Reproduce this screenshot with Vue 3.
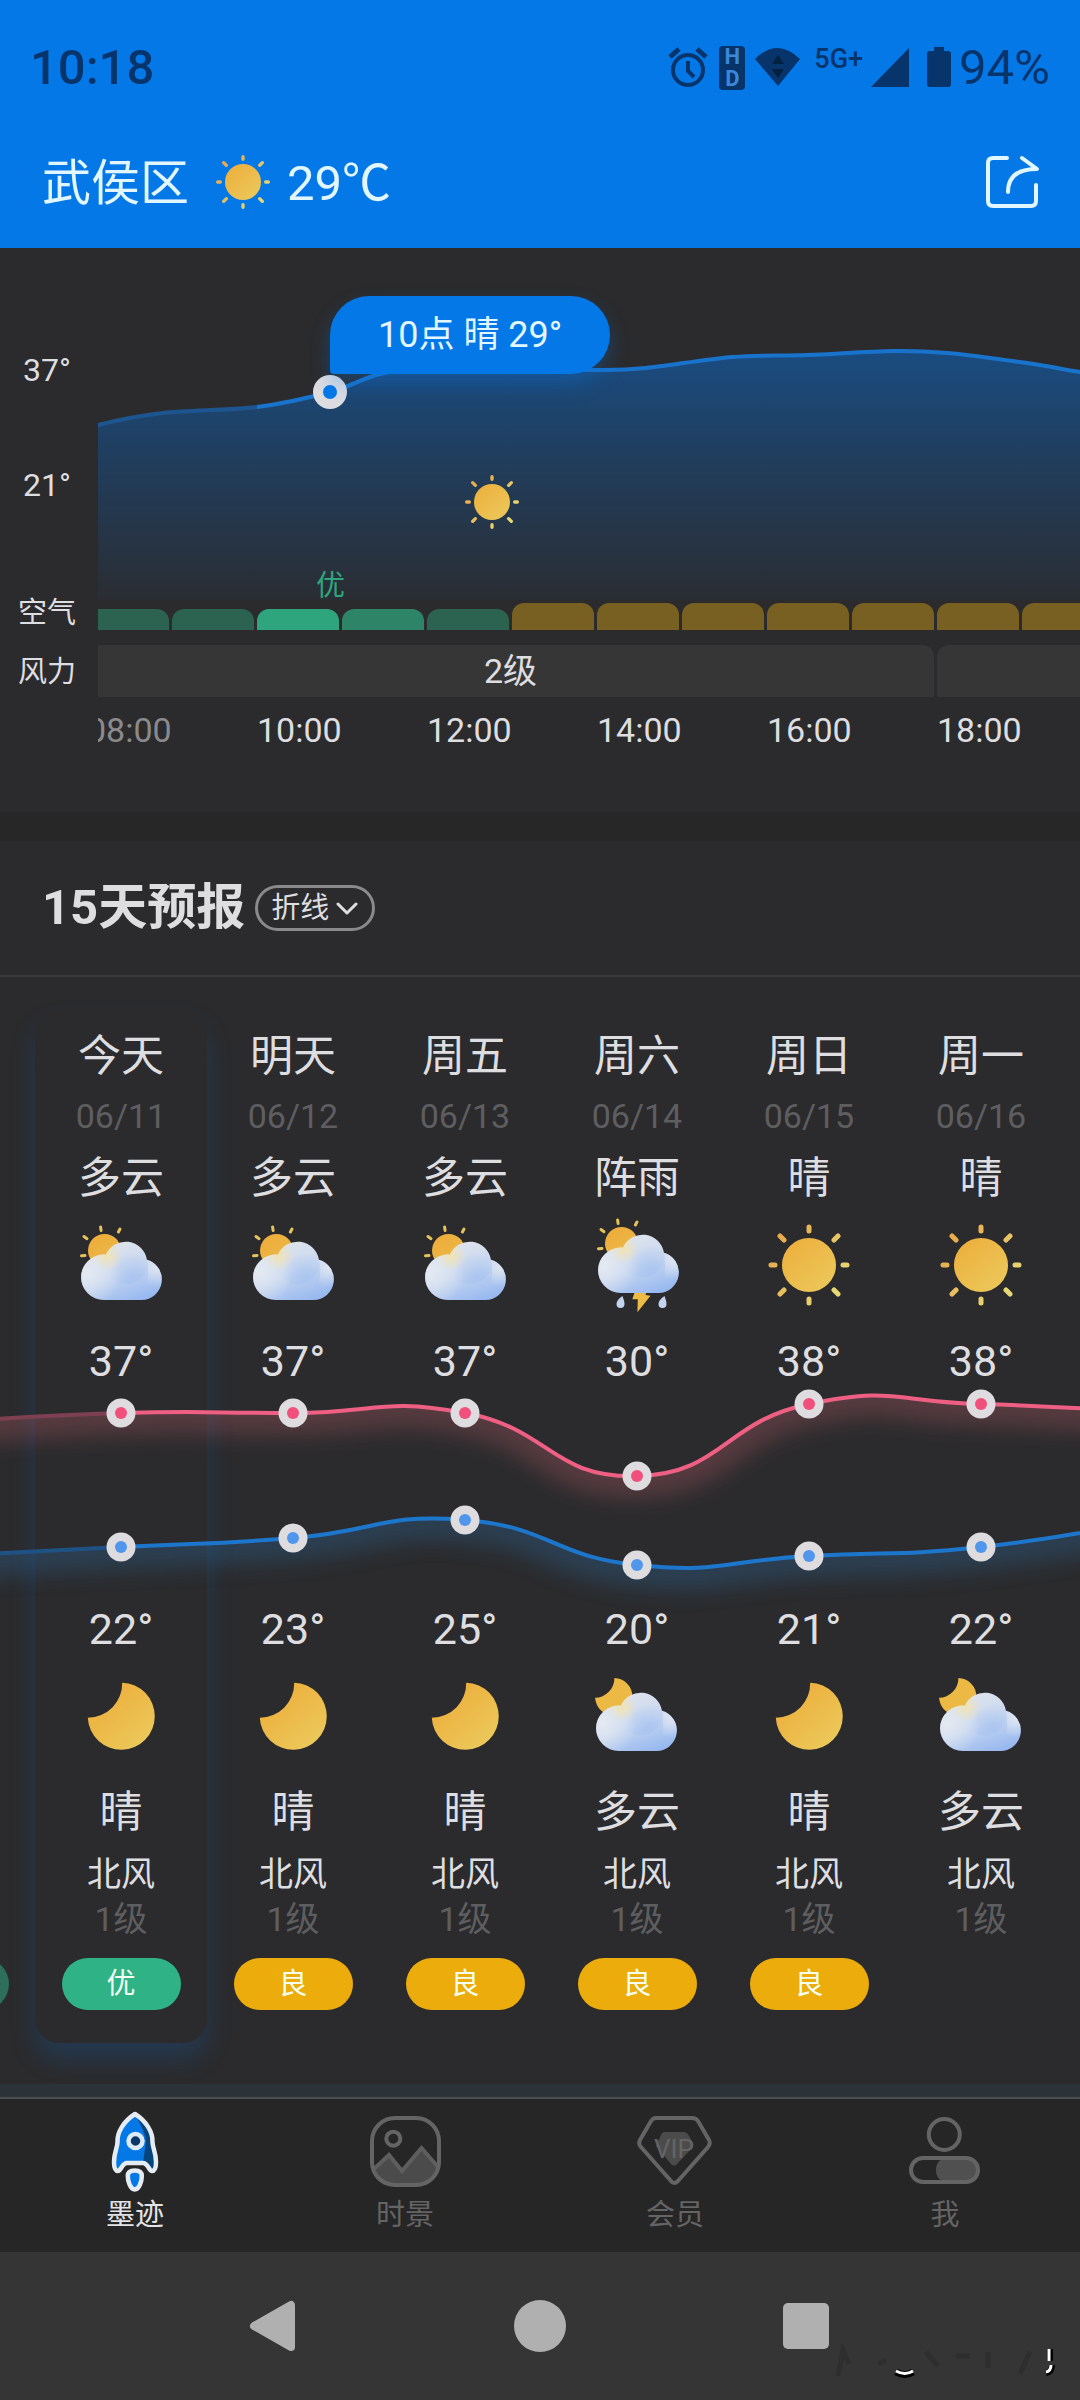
<template>
  <div class="weather-app">
    <svg class="sprite" width="0" height="0" aria-hidden="true">
      <defs>
        <linearGradient id="sunFill" gradientUnits="userSpaceOnUse" x1="24" y1="22" x2="70" y2="76">
          <stop offset="0" stop-color="#edae3c" />
          <stop offset="1" stop-color="#ebca5c" />
        </linearGradient>
        <linearGradient id="rayFill" gradientUnits="userSpaceOnUse" x1="12" y1="20" x2="84" y2="76">
          <stop offset="0" stop-color="#e9a84a" />
          <stop offset="1" stop-color="#e6dc78" />
        </linearGradient>
        <linearGradient id="cloudFill" gradientUnits="userSpaceOnUse" x1="36" y1="28" x2="56" y2="86">
          <stop offset="0" stop-color="#dfe4ed" />
          <stop offset="0.5" stop-color="#c6d6f0" />
          <stop offset="1" stop-color="#98b9f0" />
        </linearGradient>
        <radialGradient id="cloudLeft" gradientUnits="userSpaceOnUse" cx="14" cy="56" r="34">
          <stop offset="0" stop-color="#e6ebf2" stop-opacity="0.9" />
          <stop offset="1" stop-color="#e6ebf2" stop-opacity="0" />
        </radialGradient>
        <radialGradient id="cloudRight" gradientUnits="userSpaceOnUse" cx="84" cy="50" r="20">
          <stop offset="0" stop-color="#e2e8f2" stop-opacity="0.9" />
          <stop offset="1" stop-color="#e2e8f2" stop-opacity="0" />
        </radialGradient>
        <radialGradient id="cloudWarm" gradientUnits="userSpaceOnUse" cx="34" cy="39" r="15">
          <stop offset="0" stop-color="#f3e3ac" stop-opacity="0.9" />
          <stop offset="1" stop-color="#f3e3ac" stop-opacity="0" />
        </radialGradient>
        <radialGradient id="cloudCore" gradientUnits="userSpaceOnUse" cx="60" cy="60" r="24">
          <stop offset="0" stop-color="#a4c1f0" stop-opacity="0.7" />
          <stop offset="1" stop-color="#a4c1f0" stop-opacity="0" />
        </radialGradient>
      </defs>

      <symbol id="sunny" viewBox="0 0 96 96">
        <circle cx="48" cy="48" r="27" fill="url(#sunFill)" />
        <g stroke="url(#rayFill)" stroke-width="5" stroke-linecap="round">
          <path d="M48 10v4M48 82v4M10 48h4M82 48h4M19 19l4 4M73 73l4 4M77 19l-4 4M23 73l-4 4" />
        </g>
      </symbol>

      <symbol id="cloud" viewBox="0 0 96 96">
        <path id="cloudShape" d="M31 83A22.700 22.700 0 1 1 33 37.700 21.500 21.500 0 0 1 74 42.800 20.500 20.500 0 0 1 68.500 83z" fill="url(#cloudFill)" />
        <circle cx="53" cy="46" r="21.500" fill="url(#cloudCore)" />
        <circle cx="30.700" cy="60.300" r="22.700" fill="url(#cloudLeft)" />
        <path d="M74 42.800A20.500 20.500 0 0 1 68.500 83Q78 60 74 42.800z" fill="url(#cloudRight)" />
        <path d="M31 83A22.700 22.700 0 1 1 33 37.700 21.500 21.500 0 0 1 53 24V83z" fill="url(#cloudWarm)" />
      </symbol>

      <symbol id="peekSun" viewBox="0 0 96 96">
        <circle cx="31.500" cy="33.500" r="16.500" fill="url(#sunFill)" />
        <path d="M27.600 10l.5 3.500M47 12l-1.600 3M11 19.500l3 2.200M8.500 38.800l3.500-.4" stroke="#e3c35a" stroke-width="3" stroke-linecap="round" />
      </symbol>

      <symbol id="cloudy" viewBox="0 0 96 96">
        <use href="#peekSun" width="96" height="96" />
        <use href="#cloud" width="96" height="96" />
      </symbol>

      <symbol id="shower" viewBox="0 0 96 96">
        <path d="M46.700 72L43.300 82.300h5.500l-.4 13L61.500 78.700l-5-.7 1.500-6z" fill="#eebb47" />
        <path d="M33.500 79q-6 4-6 8a4 4 0 0 0 8 0q0-3-2-8zM75.500 79q-6 4-6 8a4 4 0 0 0 8 0q0-3-2-8z" fill="#c3d3ee" />
        <use href="#peekSun" x="1" y="-7" width="96" height="96" />
        <use href="#cloud" x="1" y="-7" width="96" height="96" />
      </symbol>

      <symbol id="moon" viewBox="0 0 96 96">
        <path d="M49.200 9.700A33.500 33.500 0 1 1 14.800 44.700 34.300 34.300 0 0 0 49.200 9.700z" fill="url(#sunFill)" />
      </symbol>

      <symbol id="nightCloudy" viewBox="0 0 96 96">
        <path d="M25.400 5A18.700 18.700 0 1 1 6.100 24.700 19.500 19.500 0 0 0 25.400 5z" fill="#ecb945" />
        <use href="#cloud" x="-1" y="-5" width="96" height="96" />
      </symbol>
    </svg>

    <header class="top">
      <div class="status-bar">
        <span class="clock">10:18</span>
        <div class="status-icons">
          <svg width="44" height="44" viewBox="0 0 44 44" fill="none" stroke="currentColor">
            <circle cx="21" cy="24" r="15" stroke-width="4" />
            <path d="M3 11l9-8M39 11l-9-8" stroke-width="5" />
            <path d="M21 15v10l6 6" stroke-width="4" />
          </svg>
          <span class="hd"><b>H</b><b>D</b></span>
          <svg width="51" height="44" viewBox="0 0 51 44">
            <path d="M0 13Q22 -9 45 13L23 40z" fill="currentColor" />
            <path d="M23 9l6 9H17zM23 32l6-9H17z" fill="#02203f" />
          </svg>
          <span class="network">5G+</span>
          <svg width="48" height="44" viewBox="0 0 48 44">
            <path d="M38 2v39H0z" fill="currentColor" />
          </svg>
          <svg width="24" height="44" viewBox="0 0 24 44">
            <path d="M7 1h10v4h4q3 0 3 3v30q0 3-3 3H3q-3 0-3-3V8q0-3 3-3h4z" fill="currentColor" />
          </svg>
          <span class="battery">94%</span>
        </div>
      </div>
      <div class="title-bar">
        <h1>武侯区</h1>
        <svg class="title-sun"><use href="#sunny" /></svg>
        <span class="now-temp">29℃</span>
        <button class="share" aria-label="分享">
          <svg width="54" height="54" viewBox="0 0 54 54" fill="none" stroke="#e2f6ff" stroke-width="4" stroke-linecap="round" stroke-linejoin="round">
            <path d="M21 3H7q-5 0-5 5v38q0 5 5 5h38q5 0 5-5V30" />
            <path d="M22 37C22 21 32 14 51 14L36 3" />
          </svg>
        </button>
      </div>
    </header>

    <section class="hourly">
      <div class="axis">
        <span class="axis-high">37°</span>
        <span class="axis-low">21°</span>
        <span class="axis-air">空气</span>
        <span class="axis-wind">风力</span>
      </div>
      <div class="hour-scroll">
        <div class="hour-track">
          <svg class="hour-chart" width="1020" height="352">
            <defs>
              <linearGradient id="hourFill" gradientUnits="userSpaceOnUse" x1="0" y1="100" x2="0" y2="352">
                <stop offset="0" stop-color="#194c82" />
                <stop offset="0.4" stop-color="#203f60" />
                <stop offset="1" stop-color="#2a2d33" />
              </linearGradient>
              <linearGradient id="hourLine" gradientUnits="userSpaceOnUse" x1="0" y1="0" x2="1020" y2="0">
                <stop offset="0.167" stop-color="#1c558f" />
                <stop offset="0.167" stop-color="#1873cd" />
              </linearGradient>
            </defs>
            <path :d="hourPath + 'V352H-30z'" fill="url(#hourFill)" />
            <path :d="hourPath" fill="none" stroke="url(#hourLine)" stroke-width="4" />
            <circle cx="243" cy="144" r="17" fill="#dddde1" />
            <circle cx="243" cy="144" r="7" fill="#0578e8" />
          </svg>
          <div class="hour-tip">10点 晴 29°</div>
          <svg class="hour-sun"><use href="#sunny" /></svg>
          <span class="air-label">优</span>
          <div class="air-row">
            <i v-for="(level, i) in airLevels" :key="i" class="air-bar" :class="level"></i>
          </div>
          <div class="wind-row">
            <div class="wind-block wide">2级</div>
            <div class="wind-block"></div>
          </div>
          <div class="time-row">
            <span v-for="time in times" :key="time" :class="{ past: time === '08:00' }">{{ time }}</span>
          </div>
        </div>
      </div>
    </section>

    <section class="forecast">
      <div class="forecast-head">
        <h2>15天预报</h2>
        <label class="mode">
          <select v-model="mode" aria-label="显示方式">
            <option value="line">折线</option>
          </select>
          <svg width="22" height="14" viewBox="0 0 22 14" fill="none" stroke="#dedee0" stroke-width="3" stroke-linecap="round" stroke-linejoin="round">
            <path d="M2 2l9 9 9-9" />
          </svg>
        </label>
      </div>

      <div class="day-scroll">
        <div class="day-track">
          <div v-for="(day, i) in days" :key="i" class="day" :class="{ today: i === 1, past: i === 0 }">
            <template v-if="day.name">
              <span class="big">{{ day.name }}</span>
              <span class="date">{{ day.date }}</span>
              <span class="big">{{ day.text }}</span>
              <svg class="day-icon"><use :href="'#' + day.icon" /></svg>
              <span class="temp">{{ day.high }}°</span>
              <div class="chart-space"></div>
              <span class="temp low">{{ day.low }}°</span>
              <svg class="day-icon"><use :href="'#' + day.nightIcon" /></svg>
              <span class="big">{{ day.nightText }}</span>
              <div class="wind">北风<small>1级</small></div>
            </template>
            <span v-if="day.air" class="air-pill" :class="day.air">{{ airNames[day.air] }}</span>
            <span v-else-if="i === 0" class="air-pill good"></span>
          </div>

          <svg class="day-chart" width="1376" height="260">
            <defs>
              <linearGradient id="highLine" gradientUnits="userSpaceOnUse" x1="0" y1="0" x2="1376" y2="0">
                <stop offset="0.1875" stop-color="#7d3f52" />
                <stop offset="0.1875" stop-color="#ee5f83" />
              </linearGradient>
              <linearGradient id="lowLine" gradientUnits="userSpaceOnUse" x1="0" y1="0" x2="1376" y2="0">
                <stop offset="0.1875" stop-color="#1f5284" />
                <stop offset="0.1875" stop-color="#1c76cc" />
              </linearGradient>
              <filter id="soft" filterUnits="userSpaceOnUse" x="0" y="-20" width="1376" height="320">
                <feGaussianBlur stdDeviation="11" />
              </filter>
              <clipPath id="underHigh"><path :d="highPath + 'V320H86z'" /></clipPath>
              <clipPath id="underLow"><path :d="lowPath + 'V320H86z'" /></clipPath>
            </defs>
            <g clip-path="url(#underHigh)">
              <path :d="highPath" class="glow" stroke="#d96a78" filter="url(#soft)" />
            </g>
            <g clip-path="url(#underLow)">
              <path :d="lowPath" class="glow" stroke="#2d7fc4" filter="url(#soft)" />
            </g>
            <path :d="highPath" fill="none" stroke="url(#highLine)" stroke-width="4" />
            <path :d="lowPath" fill="none" stroke="url(#lowLine)" stroke-width="4" />
            <g v-for="(p, i) in highPoints" :key="'h' + i">
              <circle :cx="p[0]" :cy="p[1]" r="14.500" fill="#dedcde" />
              <circle :cx="p[0]" :cy="p[1]" r="6" fill="#f0507b" />
            </g>
            <g v-for="(p, i) in lowPoints" :key="'l' + i">
              <circle :cx="p[0]" :cy="p[1]" r="14.500" fill="#dedcde" />
              <circle :cx="p[0]" :cy="p[1]" r="6" fill="#4f96ec" />
            </g>
          </svg>
        </div>
      </div>
    </section>

    <div class="next-card"></div>

    <nav class="tabs">
      <a href="#" class="tab active">
        <svg class="tab-icon" viewBox="0 0 96 96">
          <path d="M48 11C37 18 30 29 30.500 39c0 6-3.500 10-3.500 20 0 6 1 9 4 9s4-8 9-8h16c5 0 6 8 9 8s4-3 4-9c0-10-3.500-14-3.500-20C66 29 59 18 48 11z" fill="#0578e8" />
          <path d="M48 12c10 6 17 17 17 27 0 6 3 10 3 20 0 5-1 7-3 7s-4-5-9-6l3-22q-2-12-11-26z" fill="#06447c" />
          <path d="M48 11C37 18 30 29 30.500 39c0 6-3.500 10-3.500 20 0 6 1 9 4 9s4-8 9-8h16c5 0 6 8 9 8s4-3 4-9c0-10-3.500-14-3.500-20C66 29 59 18 48 11z" fill="none" stroke="#e6ecf3" stroke-width="4.500" stroke-linejoin="round" />
          <circle cx="48.500" cy="38" r="7" fill="#0b3768" stroke="#dce9f7" stroke-width="4.500" />
          <path d="M47.800 67.500c-4.500 0-7 2-7 5.500 0 5 2.500 13.500 7 13.500s7-8.500 7-13.500c0-3.500-2.500-5.500-7-5.500z" fill="#0578e8" stroke="#e6ecf3" stroke-width="4.500" />
        </svg>
        <span>墨迹</span>
      </a>
      <a href="#" class="tab">
        <svg class="tab-icon" viewBox="0 0 96 96">
          <path d="M15 66l17-15 13 17 19.500-24 17 21q-2 17-21 17H36q-18 0-21-16z" fill="#4b4b4b" />
          <path d="M16 67l16-15 13 16 19.500-23L81 64" fill="none" stroke="#5e5e5e" stroke-width="4" />
          <rect x="15" y="15" width="67" height="67" rx="23" fill="none" stroke="#646464" stroke-width="4" />
          <circle cx="36.300" cy="35.700" r="7" fill="none" stroke="#646464" stroke-width="4" />
        </svg>
        <span>时景</span>
      </a>
      <a href="#" class="tab">
        <svg class="tab-icon" viewBox="0 0 96 96">
          <path d="M37 29h20q3 0 5 4l4 7q1 3-1 5L50 61q-3 3-6 0L29 43l5-11q1-3 3-3z" fill="#4b4b4b" />
          <path d="M29 15h36q4 0 6 3l11 19q2 3-1 7L51 78q-4 4-7 0L14 44q-3-3-1-7l11-19q2-3 5-3z" fill="none" stroke="#646464" stroke-width="4" />
          <text class="vip-text" x="47" y="55" text-anchor="middle">VIP</text>
        </svg>
        <span>会员</span>
      </a>
      <a href="#" class="tab">
        <svg class="tab-icon" viewBox="0 0 96 96">
          <path d="M50 55h18a12 12 0 0 1 0 24H50q-11-1-11-12t11-12z" fill="#505050" />
          <rect x="14" y="55" width="67" height="24" rx="12" fill="none" stroke="#646464" stroke-width="4" />
          <circle cx="47.300" cy="31.500" r="15.500" fill="none" stroke="#646464" stroke-width="4" />
        </svg>
        <span>我</span>
      </a>
    </nav>

    <footer class="system-nav">
      <button aria-label="返回">
        <svg width="52" height="52" viewBox="0 0 52 52">
          <path d="M43 5v42L6 26z" fill="#b0b0b0" stroke="#b0b0b0" stroke-width="8" stroke-linejoin="round" />
        </svg>
      </button>
      <button aria-label="主屏幕">
        <svg width="52" height="52" viewBox="0 0 52 52"><circle cx="26" cy="26" r="26" fill="#b0b0b0" /></svg>
      </button>
      <button aria-label="最近任务">
        <svg width="52" height="52" viewBox="0 0 52 52"><rect x="3" y="3" width="46" height="46" rx="5" fill="#b0b0b0" /></svg>
      </button>
      <svg class="smudge" width="230" height="36" viewBox="0 0 230 36">
        <g stroke="#262626" stroke-width="5" opacity="0.4" fill="none">
          <path d="M8 32l5-26 6 14M48 20l8-4M96 8l12 14M126 12h14M158 8v16M190 30l10-22" />
        </g>
        <path d="M66 28q9 5 17 0" stroke="#000" stroke-width="7" fill="none" />
        <path d="M66 27q9 5 17 0" stroke="#fff" stroke-width="3" fill="none" />
        <path d="M220 5v12M222 21q0 7-6 8" stroke="#000" stroke-width="6" fill="none" />
        <path d="M219 5v12M221 21q0 6-5 7" stroke="#fff" stroke-width="3" fill="none" />
      </svg>
    </footer>
  </div>
</template>

<script setup>
import { ref } from 'vue'

const mode = ref('line')

const times = ['08:00', '10:00', '12:00', '14:00', '16:00', '18:00']

const airLevels = [
  'good', 'good', 'good now', 'good next', 'good', 'fair',
  'fair', 'fair', 'fair', 'fair', 'fair', 'fair'
]

const airNames = { good: '优', fair: '良' }

// first and last entries only carry the curve past the screen edges
const days = [
  { high: 36, low: 21 },
  { name: '今天', date: '06/11', text: '多云', icon: 'cloudy', high: 37, low: 22, nightIcon: 'moon', nightText: '晴', air: 'good' },
  { name: '明天', date: '06/12', text: '多云', icon: 'cloudy', high: 37, low: 23, nightIcon: 'moon', nightText: '晴', air: 'fair' },
  { name: '周五', date: '06/13', text: '多云', icon: 'cloudy', high: 37, low: 25, nightIcon: 'moon', nightText: '晴', air: 'fair' },
  { name: '周六', date: '06/14', text: '阵雨', icon: 'shower', high: 30, low: 20, nightIcon: 'nightCloudy', nightText: '多云', air: 'fair' },
  { name: '周日', date: '06/15', text: '晴', icon: 'sunny', high: 38, low: 21, nightIcon: 'moon', nightText: '晴', air: 'fair' },
  { name: '周一', date: '06/16', text: '晴', icon: 'sunny', high: 38, low: 22, nightIcon: 'nightCloudy', nightText: '多云' },
  { high: 37, low: 25 }
]

function spline(points, tension) {
  let d = `M${points[0][0]} ${points[0][1]}`
  for (let i = 0; i < points.length - 1; i++) {
    const p0 = points[i - 1] || points[i]
    const p1 = points[i]
    const p2 = points[i + 1]
    const p3 = points[i + 2] || p2
    d += `C${p1[0] + (p2[0] - p0[0]) / tension} ${p1[1] + (p2[1] - p0[1]) / tension}`
    d += ` ${p2[0] - (p3[0] - p1[0]) / tension} ${p2[1] - (p3[1] - p1[1]) / tension}`
    d += ` ${p2[0]} ${p2[1]}`
  }
  return d
}

const hourPath = spline([
  [-30, 192], [11, 177], [76, 165], [170, 159], [243, 144], [293, 126], [350, 118],
  [430, 120], [513, 122], [559, 120], [646, 109], [720, 107], [806, 103], [860, 105],
  [940, 115], [993, 124], [1050, 132]
], 6)

const DAY_WIDTH = 172
const DEGREE = 9

const highPoints = days.map((day, i) => [86 + DAY_WIDTH * i, 366 - day.high * DEGREE])
const lowPoints = days.map((day, i) => [86 + DAY_WIDTH * i, 365 - day.low * DEGREE])
const highPath = spline(highPoints, 4)
const lowPath = spline(lowPoints, 4)
</script>

<style>
body {
  background: #353535;
}
</style>

<style scoped>
.weather-app {
  overflow: hidden;
  background: #2b2b2d;
  color: #dedee0;
  font-family: Roboto, 'Noto Sans CJK SC', sans-serif;
}

.sprite {
  position: absolute;
}

svg {
  display: block;
  flex-shrink: 0;
}

h1,
h2 {
  margin: 0;
}

button {
  padding: 0;
  border: none;
  background: none;
  cursor: pointer;
}

/* top */
.top {
  padding-bottom: 20px;
  background: #0578e8;
}

.status-bar {
  display: flex;
  align-items: center;
  justify-content: space-between;
  height: 136px;
  padding: 0 30px;
  box-sizing: border-box;
  color: #06346b;
}

.clock,
.battery {
  font-size: 49px;
  line-height: 44px;
  font-weight: 500;
}

.battery {
  font-weight: 400;
}

.status-icons {
  display: flex;
  gap: 8px;
}

.network {
  font-size: 27px;
  line-height: 26px;
  font-weight: 500;
}

.hd {
  display: flex;
  flex-direction: column;
  width: 26px;
  height: 44px;
  margin-right: 2px;
  border-radius: 4px;
  background: currentColor;
  font-size: 22px;
  line-height: 22px;
  text-align: center;
}

.hd b {
  color: #3d86d8;
}

.title-bar {
  display: flex;
  align-items: center;
  height: 92px;
  padding: 0 40px 0 42px;
  color: #e2f6ff;
}

.title-bar h1 {
  padding-top: 4px;
  font-size: 49px;
  line-height: 56px;
  font-weight: 400;
}

.title-sun {
  width: 64px;
  height: 64px;
  margin: 0 12px 0 22px;
}

.now-temp {
  padding-top: 4px;
  font-size: 49px;
  line-height: 56px;
}

.share {
  margin-left: auto;
}

/* hourly */
.hourly {
  display: flex;
  padding-bottom: 62px;
  border-bottom: 29px solid #272727;
}

.axis {
  display: flex;
  flex-direction: column;
  align-items: center;
  width: 98px;
  padding: 102px 4px 0 0;
  box-sizing: border-box;
  font-size: 32px;
  line-height: 40px;
}

.axis-low {
  margin-top: 75px;
}

.axis-air,
.axis-wind {
  font-size: 29px;
}

.axis-air {
  margin-top: 88px;
}

.axis-wind {
  margin-top: 19px;
}

.hour-scroll {
  flex: 1;
  overflow: hidden;
}

.hour-track {
  position: relative;
  width: 1020px;
  margin-left: -11px;
}

.hour-tip {
  position: absolute;
  left: 243px;
  top: 48px;
  padding: 0 48px;
  border-radius: 39px 39px 39px 4px;
  background: #0578e8;
  box-shadow: 0 10px 20px rgba(5, 120, 232, 0.3);
  color: #e2f6ff;
  font-size: 36px;
  line-height: 78px;
}

.hour-sun {
  position: absolute;
  left: 373px;
  top: 222px;
  width: 64px;
  height: 64px;
}

.air-label {
  position: absolute;
  left: 229px;
  top: 318px;
  color: #2fa57e;
  font-size: 29px;
  line-height: 40px;
}

.air-row {
  display: flex;
  align-items: flex-end;
  gap: 3px;
  height: 30px;
}

.air-bar {
  width: 82px;
  height: 21px;
  flex-shrink: 0;
  border-radius: 12px 12px 0 0;
  background: #2c6250;
}

.air-bar.next {
  background: #2d8466;
}

.air-bar.now {
  background: #2fa57e;
}

.air-bar.fair {
  height: 27px;
  background: #786022;
}

.wind-row {
  display: flex;
  gap: 3px;
  margin-top: 15px;
  font-size: 34px;
  line-height: 52px;
  text-align: center;
}

.wind-block {
  flex: 1;
  border-radius: 12px 12px 0 0;
  background: #363636;
}

.wind-block.wide {
  flex: none;
  width: 847px;
}

.time-row {
  display: flex;
  margin-top: 13px;
  font-size: 34px;
  line-height: 40px;
}

.time-row span {
  width: 170px;
}

.time-row .past {
  color: #8a8a8c;
}

/* 15 days */
.forecast {
  padding-bottom: 41px;
}

.forecast-head {
  display: flex;
  align-items: center;
  gap: 10px;
  height: 134px;
  padding: 0 42px;
  border-bottom: 2px solid #39393b;
}

.forecast-head h2 {
  font-size: 49px;
  line-height: 60px;
  font-weight: 700;
}

.mode {
  position: relative;
  border: 3px solid #8a8a8c;
  border-radius: 23px;
}

.mode select {
  display: block;
  height: 40px;
  padding: 0 42px 0 13px;
  border: none;
  background: none;
  color: inherit;
  font-family: inherit;
  font-size: 29px;
  line-height: 40px;
  appearance: none;
}

.mode svg {
  position: absolute;
  right: 14px;
  top: 14px;
  pointer-events: none;
}

.day-scroll {
  padding-top: 32px;
}

.day-track {
  position: relative;
  display: flex;
  width: 1376px;
  margin-left: -137px;
}

.day {
  display: flex;
  flex-direction: column;
  align-items: center;
  gap: 16px;
  width: 172px;
  height: 1034px;
  padding: 20px 0 34px;
  box-sizing: border-box;
}

.past {
  justify-content: flex-end;
}

.today {
  border-radius: 24px;
  box-shadow: 0 16px 24px rgba(20, 90, 160, 0.3);
}

.big {
  margin: 2px 0 -2px;
  font-size: 43px;
  line-height: 50px;
}

.date {
  color: #5e5e60;
  font-size: 34px;
  line-height: 42px;
  margin-bottom: -2px;
}

.day-icon {
  width: 96px;
  height: 96px;
  overflow: visible;
}

.temp {
  font-size: 43px;
  line-height: 64px;
}

.temp.low {
  line-height: 56px;
}

.chart-space {
  height: 176px;
}

.wind {
  margin: 1px 0 -1px;
  font-size: 34px;
  line-height: 45px;
  text-align: center;
}

.wind small {
  display: block;
  color: #5e5e60;
  font-size: 34px;
}

.air-pill {
  width: 119px;
  height: 52px;
  margin: 1px 0 -1px;
  border-radius: 26px;
  color: #f4fff0;
  font-size: 29px;
  line-height: 52px;
  text-align: center;
}

.air-pill.good {
  background: #30b287;
}

.air-pill.fair {
  background: #ecac0c;
}

.past .air-pill {
  background: #2d6f5a;
}

.day-chart {
  position: absolute;
  left: 0;
  top: 371px;
}

.glow {
  fill: none;
  stroke-width: 44;
  opacity: 0.25;
}

.next-card {
  height: 13px;
  background: #2b3238;
}

/* tabs */
.tabs {
  display: flex;
  border-top: 2px solid #4c4e50;
  background: #262626;
}

.tab {
  display: flex;
  flex: 1;
  flex-direction: column;
  align-items: center;
  padding: 4px 0 20px;
  color: #646464;
  font-size: 29px;
  line-height: 33px;
  text-decoration: none;
}

.tab.active {
  color: #e4e4e6;
}

.tab-icon {
  width: 96px;
  height: 96px;
}

.vip-text {
  fill: #646464;
  font-size: 26px;
}

.system-nav {
  position: relative;
  display: flex;
  justify-content: space-between;
  align-items: center;
  height: 148px;
  padding: 0 23%;
  background: #353535;
}

.smudge {
  position: absolute;
  right: 20px;
  bottom: 20px;
}
</style>
